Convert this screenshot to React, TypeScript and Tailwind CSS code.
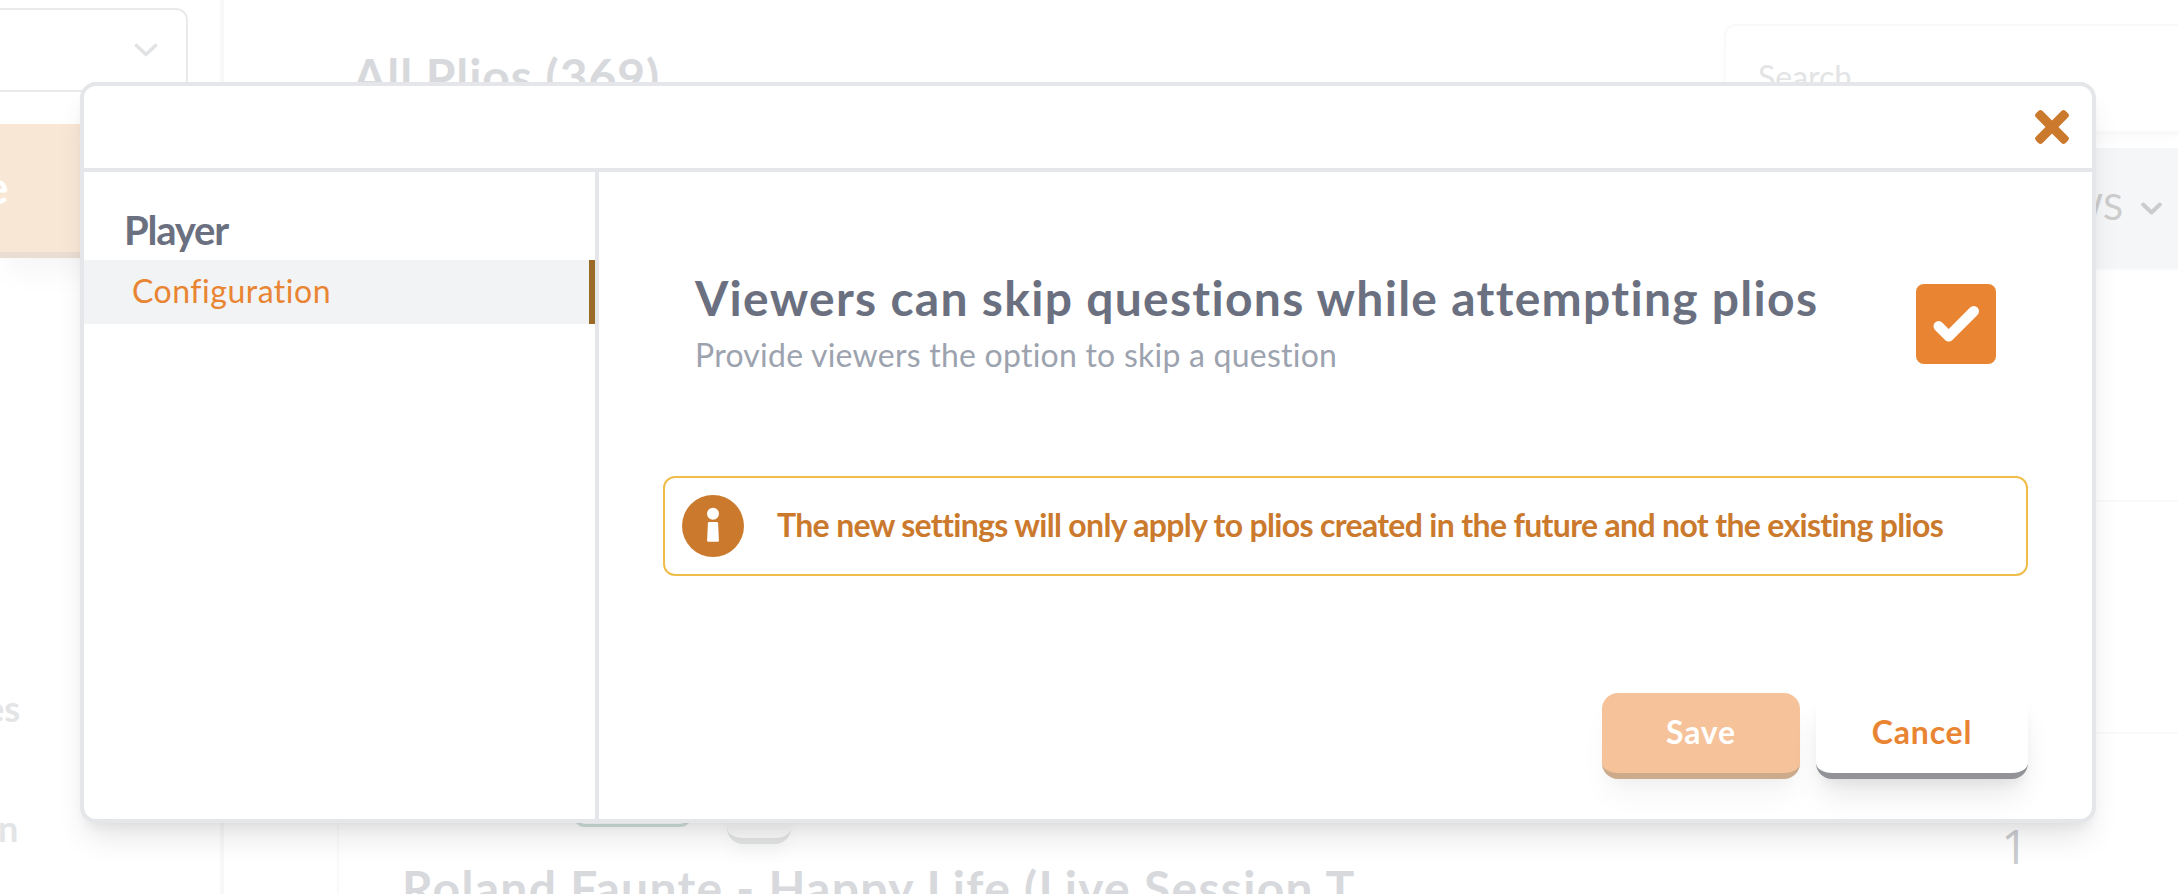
import React from "react";

function ChevronIcon({ className, strokeWidth }: { className: string; strokeWidth: number }) {
  return (
    <svg className={className} viewBox="0 0 24 14" fill="none" stroke="currentColor" strokeWidth={strokeWidth} strokeLinecap="round" strokeLinejoin="round">
      <path d="M2.5 2.5 12 11.5 21.5 2.5" />
    </svg>
  );
}

function CloseIcon() {
  return (
    <svg className="size-9" viewBox="-18 -18 36 36" fill="#cb7a2d">
      <rect x="-20.9" y="-4.6" width="41.8" height="9.2" rx="3" transform="rotate(45)" />
      <rect x="-20.9" y="-4.6" width="41.8" height="9.2" rx="3" transform="rotate(-45)" />
    </svg>
  );
}

function CheckIcon() {
  return (
    <svg className="size-20" viewBox="0 0 80 80" fill="none" stroke="white" strokeWidth="10.4" strokeLinecap="round" strokeLinejoin="round">
      <path d="M22.7 42.3 32.7 52.4 57.8 27.3" />
    </svg>
  );
}

function InfoIcon() {
  return (
    <svg className="size-[62px] shrink-0" viewBox="0 0 62 62">
      <circle cx="31" cy="31" r="31" fill="#cb7a2d" />
      <circle cx="31" cy="18.8" r="6" fill="white" />
      <path d="M27.2 27h7.6q1.2 0 1.3 1.2l.8 17.2q0 1.4-1.3 1.4h-9.2q-1.3 0-1.3-1.4l.8-17.2q.1-1.2 1.3-1.2z" fill="white" />
    </svg>
  );
}

function Sidebar() {
  return (
    <aside className="flex h-[894px] w-56 shrink-0 flex-col border-r-4 border-[#f8f8f9] pt-2">
      <div className="flex h-[84px] w-[188px] justify-end rounded-r-xl border-2 border-l-0 border-[#e9eaeb] pt-[33px] pr-7">
        <ChevronIcon className="h-[14px] w-6 text-[#e1e3e4]" strokeWidth={3.6} />
      </div>
      <div className="mt-8 flex h-[134px] w-[188px] rounded-r-2xl border-b-[6px] border-[#eaddd1] bg-[#f9e7d6] pt-[35px] shadow-[0_20px_30px_-6px_rgba(0,0,0,0.04)]">
        <span className="-ml-4 text-[46px] leading-[56px] font-bold text-white">e</span>
      </div>
      <div className="mt-[426px] flex flex-col gap-[72px] text-[36px] leading-[48px] font-bold text-[#e3e4e6]">
        <span className="-ml-[15px]">es</span>
        <span className="-ml-0.5">n</span>
      </div>
    </aside>
  );
}

function Library() {
  return (
    <main className="flex min-w-0 grow flex-col pt-6">
      <div className="flex justify-between pl-[129px]">
        <h1 className="pt-5 text-[48px] leading-[64px] font-bold tracking-[0.02em] text-[#d7d9dd]">All Plios (369)</h1>
        <div className="h-[111px] w-[454px] rounded-l-xl border-2 border-r-0 border-b-4 border-[#f9f9fa] pt-[31px] pl-8 text-[32px] leading-10 text-[#e3e4e5] shadow-[0_4px_12px_rgba(0,0,0,0.02)]">
          Search
        </div>
      </div>
      <div className="mt-[13px] ml-[113px] flex h-[759px] flex-col border-l-2 border-[#f9f9fa]">
        <div className="flex h-[122px] shrink-0 items-center justify-end gap-[18px] border-b-2 border-[#f9f9fa] bg-[#f5f6f8] pr-4 text-[37px] text-[#cccccc]">
          <span className="pb-1">VIEWS</span>
          <ChevronIcon className="h-[13px] w-[21px]" strokeWidth={4.6} />
        </div>
        <div className="h-[232px] shrink-0 border-b-2 border-[#fafafa]" />
        <div className="h-[232px] shrink-0 border-b-2 border-[#fafafa]" />
        <div className="flex grow justify-between overflow-hidden pt-[31px] pl-[63px]">
          <div className="flex flex-col">
            <div className="flex gap-[35px] pl-[171px]">
              <div className="h-[62px] w-[119px] rounded-xl border-[3px] border-[#cfe0da]" />
              <div className="h-[79px] w-16 rounded-2xl border-b-[6px] border-[#e2e4e3] bg-[#fafafa] shadow-[0_12px_20px_-4px_rgba(0,0,0,0.04)]" />
            </div>
            <h2 className="mt-3 text-[48px] leading-[64px] font-bold tracking-[0.027em] whitespace-nowrap text-[#d7d9dd]">
              Roland Faunte - Happy Life (Live Session T
            </h2>
          </div>
          <span className="mr-[150px] pt-[49px] font-['Open_Sans'] text-[47px] leading-[64px] text-[#cbccd0]">1</span>
        </div>
      </div>
    </main>
  );
}

function SettingsDialog() {
  return (
    <section
      role="dialog"
      className="absolute top-[82px] left-20 flex h-[741px] w-[2016px] flex-col overflow-hidden rounded-2xl border-4 border-[#e5e6ea] bg-white shadow-[0_20px_30px_-6px_rgba(0,0,0,0.1),0_8px_12px_-4px_rgba(0,0,0,0.05)]"
    >
      <header className="flex h-[86px] shrink-0 items-center justify-end border-b-4 border-[#e5e6ea] pr-[22px]">
        <button aria-label="Close">
          <CloseIcon />
        </button>
      </header>
      <div className="flex grow">
        <nav className="flex w-[515px] shrink-0 flex-col border-r-4 border-[#e5e6ea] pt-[30px]">
          <h2 className="mb-0.5 pl-10 text-[40px] leading-[56px] font-bold tracking-[-0.03em] text-[#6b7080]">Player</h2>
          <a className="flex h-16 items-center border-r-[6px] border-[#9a6b26] bg-[#f2f3f5] pb-[3px] pl-12 text-[32px] tracking-[0.016em] text-[#e98532]">
            Configuration
          </a>
        </nav>
        <div className="flex grow flex-col pt-[94px] pr-16 pl-16">
          <div className="flex justify-between pr-8 pl-8">
            <div className="flex flex-col">
              <h3 className="text-[48px] leading-[64px] font-bold tracking-[0.0268em] whitespace-nowrap text-[#6b7080]">
                Viewers can skip questions while attempting plios
              </h3>
              <p className="pt-px text-[32px] leading-[48px] tracking-[0.0075em] text-[#9ca3af]">
                Provide viewers the option to skip a question
              </p>
            </div>
            <div className="mt-[18px] size-20 rounded-lg bg-[#e98532]">
              <CheckIcon />
            </div>
          </div>
          <div className="mt-[97px] flex h-[100px] shrink-0 items-center gap-[33px] rounded-xl border-2 border-[#f0bc4a] pl-[17px] text-[32px] font-bold tracking-[-0.021em] whitespace-nowrap text-[#cb7a2d]">
            <InfoIcon />
            <span className="pb-0.5">The new settings will only apply to plios created in the future and not the existing plios</span>
          </div>
          <div className="mt-[117px] flex justify-end gap-4 text-[32px] font-bold tracking-[0.025em]">
            <button className="h-[86px] w-[198px] rounded-2xl border-b-[6px] border-[#ccaa8c] bg-[#f6c299] pb-0.5 text-white shadow-[0_20px_30px_-6px_rgba(0,0,0,0.05),0_8px_12px_-4px_rgba(0,0,0,0.025)]">
              Save
            </button>
            <button className="h-[86px] w-[212px] rounded-2xl border-b-[6px] border-[#919398] bg-white pb-0.5 text-[#e98532] shadow-[0_20px_30px_-6px_rgba(0,0,0,0.1),0_8px_12px_-4px_rgba(0,0,0,0.05)]">
              Cancel
            </button>
          </div>
        </div>
      </div>
    </section>
  );
}

export default function App() {
  return (
    <div className="relative flex h-[894px] w-[2178px] overflow-hidden bg-white font-[Lato,sans-serif]">
      <Sidebar />
      <Library />
      <SettingsDialog />
    </div>
  );
}
